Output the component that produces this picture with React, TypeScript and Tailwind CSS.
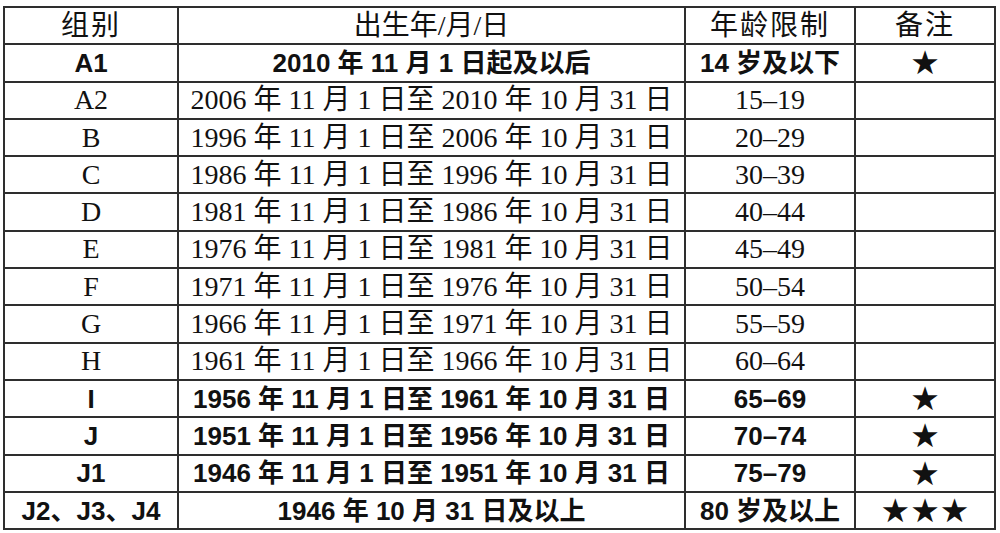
import React from "react";

type Row = {
  group: string;
  date: string;
  age: string;
  note: string;
  bold?: boolean;
};

const rows: Row[] = [
  { group: "A1", date: "2010 年 11 月 1 日起及以后", age: "14 岁及以下", note: "★", bold: true },
  { group: "A2", date: "2006 年 11 月 1 日至 2010 年 10 月 31 日", age: "15–19", note: "" },
  { group: "B", date: "1996 年 11 月 1 日至 2006 年 10 月 31 日", age: "20–29", note: "" },
  { group: "C", date: "1986 年 11 月 1 日至 1996 年 10 月 31 日", age: "30–39", note: "" },
  { group: "D", date: "1981 年 11 月 1 日至 1986 年 10 月 31 日", age: "40–44", note: "" },
  { group: "E", date: "1976 年 11 月 1 日至 1981 年 10 月 31 日", age: "45–49", note: "" },
  { group: "F", date: "1971 年 11 月 1 日至 1976 年 10 月 31 日", age: "50–54", note: "" },
  { group: "G", date: "1966 年 11 月 1 日至 1971 年 10 月 31 日", age: "55–59", note: "" },
  { group: "H", date: "1961 年 11 月 1 日至 1966 年 10 月 31 日", age: "60–64", note: "" },
  { group: "I", date: "1956 年 11 月 1 日至 1961 年 10 月 31 日", age: "65–69", note: "★", bold: true },
  { group: "J", date: "1951 年 11 月 1 日至 1956 年 10 月 31 日", age: "70–74", note: "★", bold: true },
  { group: "J1", date: "1946 年 11 月 1 日至 1951 年 10 月 31 日", age: "75–79", note: "★", bold: true },
  { group: "J2、J3、J4", date: "1946 年 10 月 31 日及以上", age: "80 岁及以上", note: "★★★", bold: true },
];

const serif = "font-['Liberation_Serif','Noto_Sans_CJK_SC',serif] font-normal text-[28px]";
const sans = "font-['Liberation_Sans','Noto_Sans_CJK_SC',sans-serif] font-bold text-[26px]";
const cell = "flex items-center justify-center border-r-2 border-b-2 border-[#2e2e2e] whitespace-nowrap leading-none text-[#111]";

export default function App() {
  return (
    <div className="h-[533px] w-[1000px] bg-white pl-[3px] pt-[6px]">
      <div className="grid w-[993px] grid-cols-[174px_507px_170px_140px] grid-rows-[repeat(14,37.3px)] border-l-2 border-t-2 border-[#2e2e2e]">
        <div className={`${cell} ${serif} tracking-[2px]`}>组别</div>
        <div className={`${cell} ${serif}`}>出生年/月/日</div>
        <div className={`${cell} ${serif} tracking-[2px]`}>年龄限制</div>
        <div className={`${cell} ${serif} tracking-[2px]`}>备注</div>
        {rows.map((r, i) => {
          const f = r.bold ? sans : serif;
          return (
            <React.Fragment key={i}>
              <div className={`${cell} ${f}`}>{r.group}</div>
              <div className={`${cell} ${f}`}>{r.date}</div>
              <div className={`${cell} ${f}`}>{r.age}</div>
              <div className={`${cell} font-['DejaVu_Sans',sans-serif] text-[33px]`}>{r.note}</div>
            </React.Fragment>
          );
        })}
      </div>
    </div>
  );
}
